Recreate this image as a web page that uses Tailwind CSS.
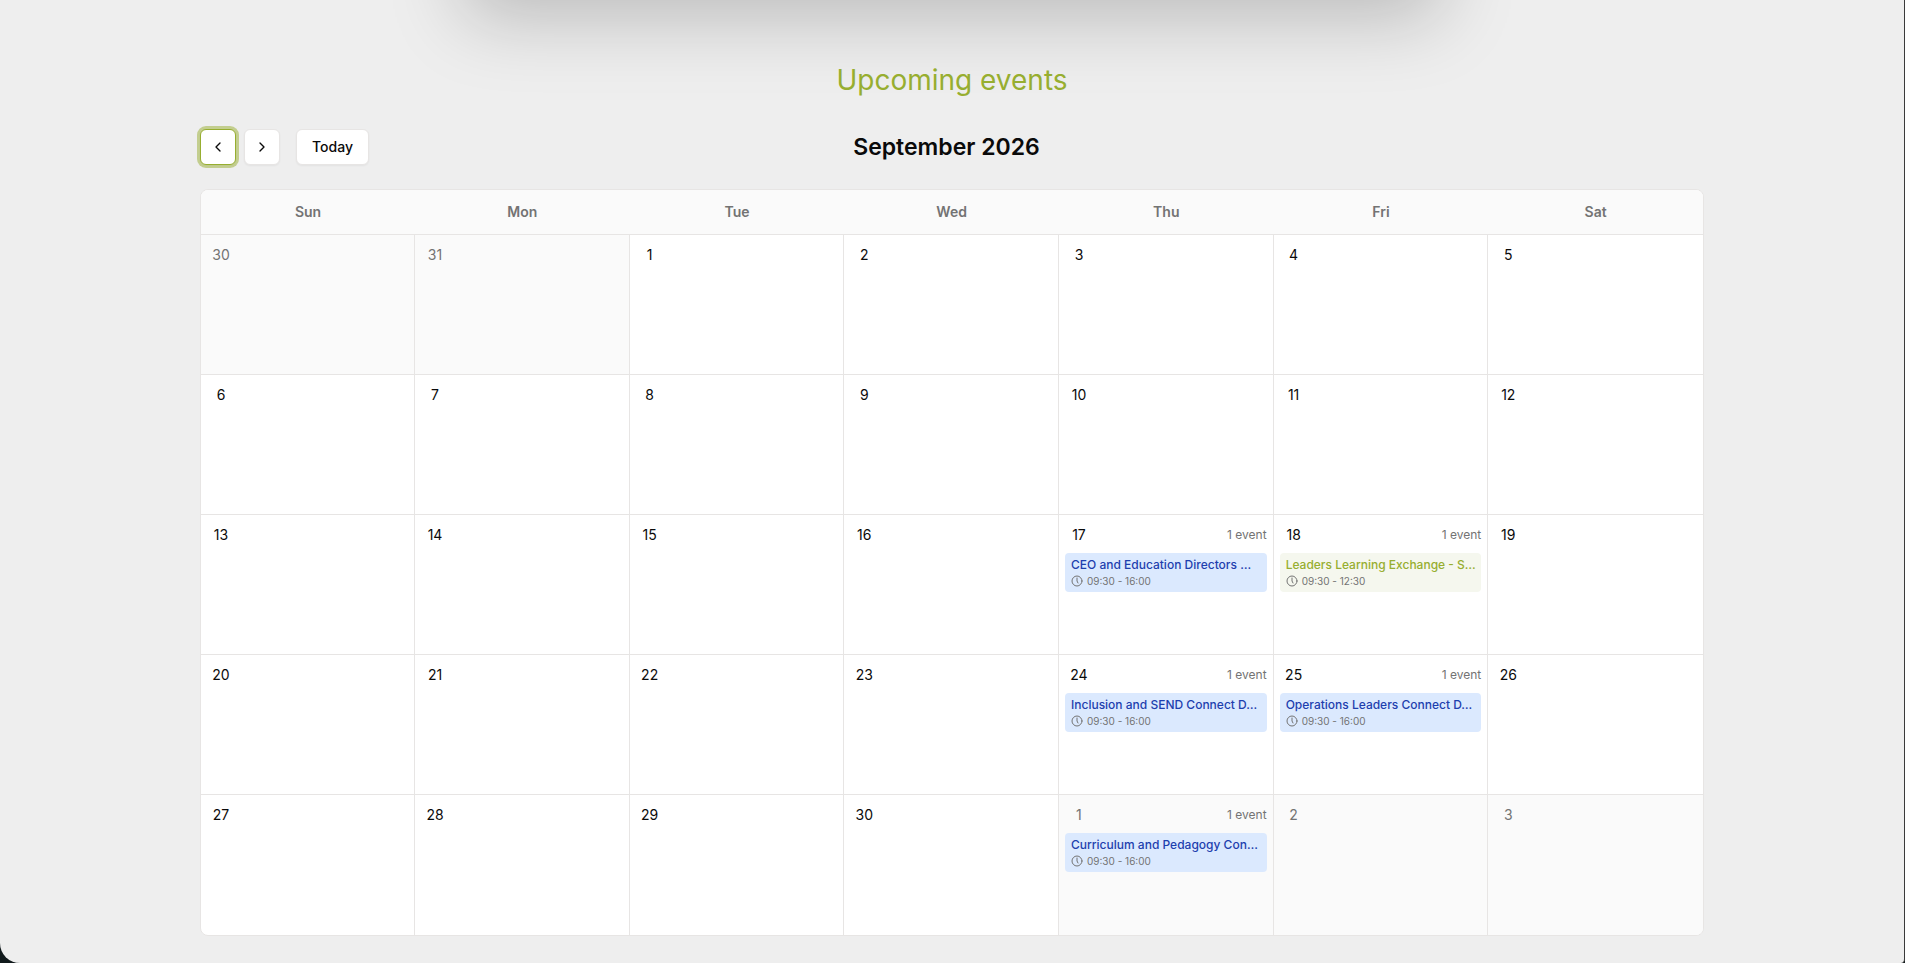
<!DOCTYPE html>
<html lang="en">
<head>
<meta charset="utf-8">
<meta name="viewport" content="width=device-width, initial-scale=1">
<title>Upcoming events</title>
<script src="https://cdn.jsdelivr.net/npm/@tailwindcss/browser@4"></script>
</head>
<body class="bg-[#111a1c] font-['Inter',sans-serif] text-neutral-950 antialiased">
<main class="min-h-screen overflow-hidden rounded-bl-[20px] rounded-br-sm border-r border-[#3a3a3a] bg-[#eeeeee] pb-6">
  <div class="mx-auto -mt-[163px] h-40 max-w-[1000px] bg-white shadow-[0_32px_76px_-12px_rgb(0_0_0/0.22)]"></div>

  <section class="mx-auto max-w-[1504px] pt-[63px]">
    <h2 class="text-center text-[28px] leading-10 text-[#97ae30]">Upcoming events</h2>

    <div class="mt-[29px] flex items-center justify-between">
      <div class="flex items-center gap-2">
        <button type="button" aria-label="Previous month" class="flex size-9 items-center justify-center rounded-md border border-[#97ae30] bg-white shadow-xs ring-3 ring-[#97ae30]/50">
          <svg class="size-4" viewBox="0 0 24 24" fill="none" stroke="currentColor" stroke-width="2" stroke-linecap="round" stroke-linejoin="round"><path d="m15 18-6-6 6-6"/></svg>
        </button>
        <button type="button" aria-label="Next month" class="flex size-9 items-center justify-center rounded-md border border-stone-200 bg-white shadow-xs">
          <svg class="size-4" viewBox="0 0 24 24" fill="none" stroke="currentColor" stroke-width="2" stroke-linecap="round" stroke-linejoin="round"><path d="m9 18 6-6-6-6"/></svg>
        </button>
        <button type="button" class="ml-2 h-9 rounded-md border border-stone-200 bg-white px-[15px] text-sm font-medium shadow-xs">Today</button>
      </div>
      <h3 class="text-[23px] leading-9 font-semibold">September 2026</h3>
      <div class="w-[180px]"></div>
    </div>

    <div class="mt-6 overflow-hidden rounded-lg border border-stone-200 bg-white">
      <table class="w-full table-fixed border-separate border-spacing-0">
        <thead>
          <tr class="h-11 bg-[#fafafa] text-sm text-neutral-500">
            <th class="w-[214px] font-semibold">Sun</th>
            <th class="font-semibold">Mon</th>
            <th class="font-semibold">Tue</th>
            <th class="font-semibold">Wed</th>
            <th class="font-semibold">Thu</th>
            <th class="font-semibold">Fri</th>
            <th class="font-semibold">Sat</th>
          </tr>
        </thead>
        <tbody id="days"></tbody>
      </table>
    </div>
  </section>
</main>
<script>
  const events = {
    18: { title: 'CEO and Education Directors …', time: '09:30 - 16:00', tone: 'blue' },
    19: { title: 'Leaders Learning Exchange - S…', time: '09:30 - 12:30', tone: 'green' },
    25: { title: 'Inclusion and SEND Connect D…', time: '09:30 - 16:00', tone: 'blue' },
    26: { title: 'Operations Leaders Connect D…', time: '09:30 - 16:00', tone: 'blue' },
    32: { title: 'Curriculum and Pedagogy Con…', time: '09:30 - 16:00', tone: 'blue' },
  };
  const tones = {
    blue: 'bg-[#dbe9fe] text-[#1e3fae]',
    green: 'bg-[#f5f7ee] text-[#97ae30]',
  };
  const card = (e) => `
    <a href="#" class="mt-1 block rounded-sm py-1 pl-1.5 ${tones[e.tone]}">
      <span class="block text-xs font-medium whitespace-nowrap">${e.title}</span>
      <span class="mt-px flex items-center gap-1 text-[10px] leading-[14px] text-neutral-500">
        <svg class="size-3" viewBox="0 0 24 24" fill="none" stroke="currentColor" stroke-width="2" stroke-linecap="round" stroke-linejoin="round"><circle cx="12" cy="12" r="10"/><path d="M12 6v6l2 4"/></svg>
        ${e.time}
      </span>
    </a>`;
  // The grid starts on Sunday 30 August, so cell 0 is two days before 1 September.
  const start = Date.UTC(2026, 7, 30);
  let html = '';
  for (let week = 0; week < 5; week++) {
    html += '<tr class="h-[140px] last:h-[141px]">';
    for (let day = 0; day < 7; day++) {
      const i = week * 7 + day;
      const date = new Date(start + i * 86400000);
      const outside = date.getUTCMonth() !== 8;
      const e = events[i];
      html += `<td class="border-t border-r border-stone-200 p-1.5 align-top last:border-r-0 ${outside ? 'bg-[#fafafa] text-neutral-500' : ''}">
        <div class="flex items-center justify-between">
          <span class="flex size-7 items-center justify-center text-sm">${date.getUTCDate()}</span>
          ${e ? '<span class="text-xs text-neutral-500">1 event</span>' : ''}
        </div>${e ? card(e) : ''}
      </td>`;
    }
    html += '</tr>';
  }
  document.getElementById('days').innerHTML = html;
</script>
</body>
</html>
